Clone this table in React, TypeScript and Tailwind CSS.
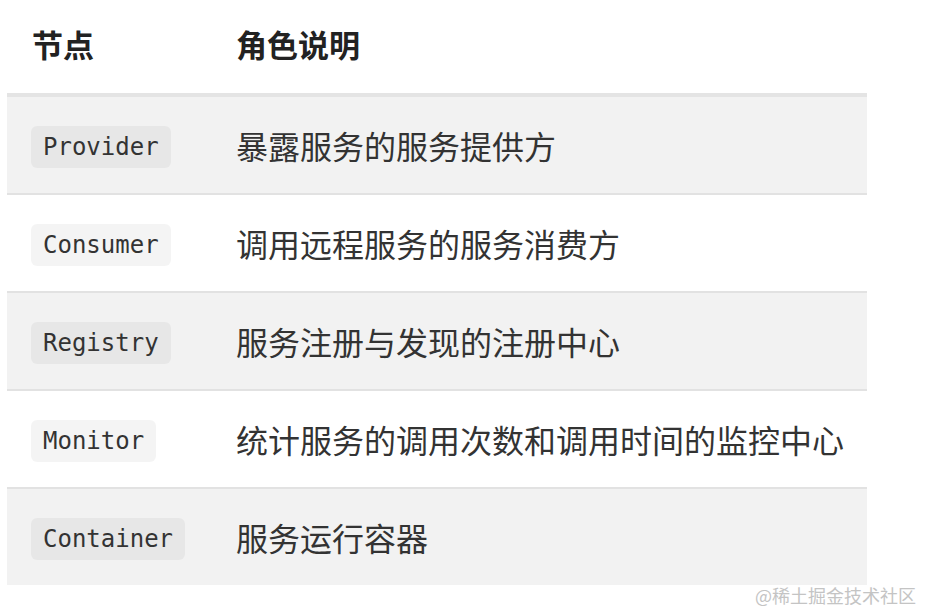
const rows = [
  { node: 'Provider', desc: '暴露服务的服务提供方' },
  { node: 'Consumer', desc: '调用远程服务的服务消费方' },
  { node: 'Registry', desc: '服务注册与发现的注册中心' },
  { node: 'Monitor', desc: '统计服务的调用次数和调用时间的监控中心' },
  { node: 'Container', desc: '服务运行容器' },
]

const cjk = "font-['Noto_Sans_CJK_SC',sans-serif]"

export default function App() {
  return (
    <div className="relative w-[935px] h-[612px] bg-white overflow-hidden">
      <div className="ml-[7px] w-[860px]">
        {/* header */}
        <div
          className={`flex items-center h-[97px] border-b-4 border-[#e4e4e4] text-[31px] font-bold text-[#222] ${cjk}`}
        >
          <div className="w-[205px] pl-[25px] pb-[4px]">节点</div>
          <div className="pl-[24px] pb-[4px]">角色说明</div>
        </div>

        {rows.map((r, i) => {
          const last = i === rows.length - 1
          return (
            <div
              key={r.node}
              className={`flex items-center ${
                last ? 'h-[96px]' : 'h-[98px] border-b-2 border-[#e2e2e2]'
              } ${i % 2 === 0 ? 'bg-[#f2f2f2]' : 'bg-white'}`}
            >
              <div className="w-[205px] pl-[24px] pt-[4px]">
                <span className="inline-flex items-center h-[42px] px-3 rounded-md bg-black/[0.045] text-[24px] text-[#333] font-['DejaVu_Sans_Mono',monospace]">
                  {r.node}
                </span>
              </div>
              <div className={`pl-[24px] text-[32px] text-[#333] ${cjk}`}>
                {r.desc}
              </div>
            </div>
          )
        })}
      </div>

      <div
        className={`absolute right-[19px] bottom-[3px] text-[18px] text-[#c4c4c4] ${cjk}`}
      >
        @稀土掘金技术社区
      </div>
    </div>
  )
}
